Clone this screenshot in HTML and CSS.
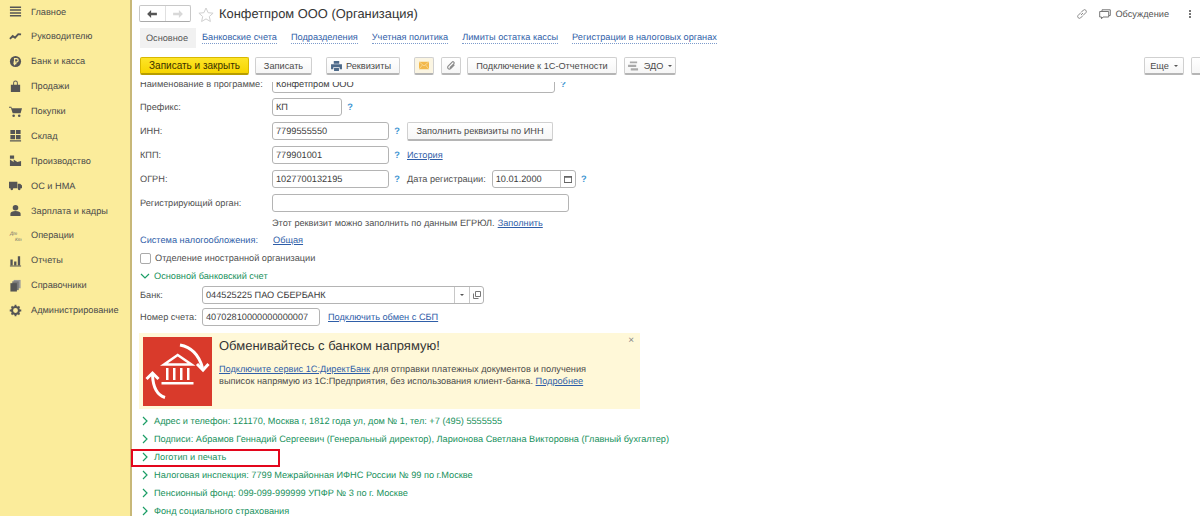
FILE: index.html
```html
<!DOCTYPE html>
<html lang="ru">
<head>
<meta charset="utf-8">
<title>Конфетпром ООО (Организация)</title>
<link rel="stylesheet" href="styles.css">
</head>
<body>
<div class="app">
  <nav class="side">
    <a class="side-item"><svg class="si" viewBox="0 0 14 14"><path d="M1 1.500h12v1.600H1zM1 4.600h12v1.600H1zM1 7.700h12v1.600H1zM1 10.800h12v1.600H1z"/></svg>Главное</a>
    <a class="side-item"><svg class="si" viewBox="0 0 14 14"><path d="M1 9.500l3-3 2.500 1.800L10 4.500l3 .2" fill="none" stroke="#555" stroke-width="2"/></svg>Руководителю</a>
    <a class="side-item"><svg class="si" viewBox="0 0 14 14"><circle cx="7" cy="7" r="6"/><path d="M6 11V3.800h2a1.900 1.900 0 0 1 0 3.800H4.800M4.800 9.300H8" fill="none" stroke="#fbec9b" stroke-width="1.300"/></svg>Банк и касса</a>
    <a class="side-item"><svg class="si" viewBox="0 0 14 14"><path d="M2 5h10v8H2zM4.500 5V3a2.500 2.500 0 0 1 5 0v2H8.500V3a1.500 1.500 0 0 0-3 0v2z"/></svg>Продажи</a>
    <a class="side-item"><svg class="si" viewBox="0 0 14 14"><path d="M0 2h2.500l.5 1.500h11L12.500 9H4L2 3H0z"/><circle cx="5" cy="11.500" r="1.400"/><circle cx="11" cy="11.500" r="1.400"/></svg>Покупки</a>
    <a class="side-item"><svg class="si" viewBox="0 0 14 14"><path d="M1.500 1h5v4.500h-5zM7.500 1h5v4.500h-5zM1.500 6.500h5V11h-5zM7.500 6.500h5V11h-5zM1 12h12v1.500H1z"/></svg>Склад</a>
    <a class="side-item"><svg class="si" viewBox="0 0 14 14"><path d="M1 13V6l4 2.500V6l4 2.500 4-1V13zM1 1.500h4.500V5H1z"/></svg>Производство</a>
    <a class="side-item"><svg class="si" viewBox="0 0 14 14"><path d="M0 3h9v7H0zM9.500 5h2.500L14 7v3H9.500z"/><circle cx="3" cy="10.500" r="1.500"/><circle cx="11" cy="10.500" r="1.500"/></svg>ОС и НМА</a>
    <a class="side-item"><svg class="si" viewBox="0 0 14 14"><circle cx="7" cy="4" r="3"/><path d="M1.500 13v-2.500c0-2 2.500-3 5.500-3s5.500 1 5.500 3V13z"/></svg>Зарплата и кадры</a>
    <a class="side-item"><svg class="si" viewBox="0 0 14 14"><text class="si-text" x="1" y="6">Дт</text><text class="si-text" x="6.500" y="12.500">Кт</text></svg>Операции</a>
    <a class="side-item"><svg class="si" viewBox="0 0 14 14"><path d="M1.500 6h2.500v6H1.500zM5.500 8H8v4H5.500zM9.500 2.500H12V12H9.500zM1 12.500h12v1H1z"/></svg>Отчеты</a>
    <a class="side-item"><svg class="si" viewBox="0 0 14 14"><path d="M5 1h7.500v9H5z" fill="#999"/><path d="M3.500 2.500h7v9.500h-7z" fill="#777"/><path d="M1.500 4.500h7V13.500h-7z"/></svg>Справочники</a>
    <a class="side-item"><svg class="si" viewBox="0 0 14 14"><circle cx="7" cy="7" r="3.700" fill="none" stroke="#555" stroke-width="2.200"/><path d="M6 .8h2v2.500H6zM6 10.700h2v2.500H6zM.8 6h2.500v2H.8zM10.700 6h2.500v2h-2.500zM2 3.400l1.400-1.400 1.700 1.700-1.400 1.400zM8.900 10.300l1.400-1.400 1.700 1.700-1.400 1.400zM2 10.600l1.700-1.700 1.400 1.400L3.400 12zM8.900 3.700L10.600 2 12 3.400l-1.700 1.700z"/></svg>Администрирование</a>
  </nav>

  <main class="main">
    <header class="titlebar">
      <div class="navpair">
        <span class="navbtn"><svg class="nav-ic" viewBox="0 0 11 9"><path d="M0 4.500L4.500 0v3H11v3H4.500v3z" fill="#555"/></svg></span>
        <span class="navbtn"><svg class="nav-ic" viewBox="0 0 11 9"><path d="M11 4.500L6.500 0v3H0v3h6.500v3z" fill="#d8d8d8"/></svg></span>
      </div>
      <svg class="star" viewBox="0 0 16 16"><path d="M8 1l2.100 4.700 5 .5-3.800 3.300 1.100 5L8 11.900l-4.400 2.600 1.100-5L.9 6.200l5-.5z" fill="none" stroke="#d0d0d0"/></svg>
      <h1 class="title">Конфетпром ООО (Организация)</h1>
      <div class="top-right">
        <svg class="link-ic" viewBox="0 0 12 12"><path d="M5 7l2-2M4.500 5L2 7.500a1.800 1.800 0 0 0 2.500 2.500L7 7.500M5 4.500L7.500 2a1.800 1.800 0 0 1 2.500 2.500L7.500 7" fill="none" stroke="#888"/></svg>
        <svg class="chat-ic" viewBox="0 0 12 11"><path d="M3 2V.8h8.300V6.500H10M.7 2.500h9V8H4L2.500 9.800V8H.7z" fill="none" stroke="#777"/></svg>
        <span class="discuss">Обсуждение</span>
        <span class="dots"><i></i><i></i><i></i></span>
      </div>
    </header>

    <div class="tabs">
      <span class="tab-active">Основное</span>
      <a class="tab">Банковские счета</a>
      <a class="tab">Подразделения</a>
      <a class="tab">Учетная политика</a>
      <a class="tab">Лимиты остатка кассы</a>
      <a class="tab">Регистрации в налоговых органах</a>
    </div>

    <div class="toolbar">
      <button class="btn btn-primary">Записать и закрыть</button>
      <button class="btn btn-save">Записать</button>
      <button class="btn btn-req"><svg class="ic" viewBox="0 0 12 11"><path d="M3 0h6v3H3zM0 3.500h12V9h-2.500V7h-7v2H0zM3.300 7.800h5.400V11H3.300z" fill="#4d6a8a"/></svg>Реквизиты</button>
      <button class="btn btn-sq btn-mail"><svg class="ic-m" viewBox="0 0 12 9"><path d="M0 0h12v9H0z" fill="#f2b84b"/><path d="M0 0l6 5 6-5M0 9l4-5M12 9L8 4" fill="none" stroke="#fbe3ac" stroke-width=".8"/></svg></button>
      <button class="btn btn-sq"><svg class="ic-m" viewBox="0 0 12 12"><path d="M10.500 5L5.500 10a2.200 2.200 0 0 1-3.300-3.200L7.500 1.500a1.500 1.500 0 0 1 2.200 2.200L4.500 9" fill="none" stroke="#8a8a8a" stroke-width="1.500"/></svg></button>
      <button class="btn btn-conn">Подключение к 1С-Отчетности</button>
      <button class="btn btn-edo"><svg class="ic" viewBox="0 0 12 11"><path d="M2 .5h8v2H2zM0 4h9v2.500H0zM3 8h8v2.500H3z" fill="#aaa"/></svg>ЭДО<span class="caret"></span></button>
      <span class="grow"></span>
      <button class="btn btn-more">Еще<span class="caret"></span></button>
      <button class="btn btn-help"></button>
    </div>

    <section class="form">
      <div class="row row-first">
        <label class="lab">Наименование в программе:</label>
        <span class="inp w-name">Конфетпром ООО</span>
        <span class="q">?</span>
      </div>
      <div class="row r24">
        <label class="lab">Префикс:</label>
        <span class="inp w-prefix">КП</span>
        <span class="q">?</span>
      </div>
      <div class="row r24">
        <label class="lab">ИНН:</label>
        <span class="inp w-code">7799555550</span>
        <span class="q">?</span>
        <button class="btn btn-fill">Заполнить реквизиты по ИНН</button>
      </div>
      <div class="row r24">
        <label class="lab">КПП:</label>
        <span class="inp w-code">779901001</span>
        <span class="q">?</span>
        <a class="lnk hist">История</a>
      </div>
      <div class="row r24">
        <label class="lab">ОГРН:</label>
        <span class="inp w-code">1027700132195</span>
        <span class="q">?</span>
        <span class="plain date-lab">Дата регистрации:</span>
        <span class="inp w-date">10.01.2000<span class="cal"><svg class="cal-ic" viewBox="0 0 9 9"><path d="M0 1h9v8H0zM1 3v5h7V3z" fill="#666"/></svg></span></span>
        <span class="q">?</span>
      </div>
      <div class="row r23">
        <label class="lab">Регистрирующий орган:</label>
        <span class="inp w-reg"></span>
      </div>
      <div class="row r17 indent">
        <span class="plain">Этот реквизит можно заполнить по данным ЕГРЮЛ.</span>
        <a class="lnk hint-lnk">Заполнить</a>
      </div>
      <div class="row r18">
        <a class="lab lab-link">Система налогообложения:</a>
        <a class="lnk">Общая</a>
      </div>
      <div class="row r18">
        <span class="check"></span>
        <span class="plain">Отделение иностранной организации</span>
      </div>
      <div class="row r18 group">
        <svg class="chev" viewBox="0 0 10 10"><path d="M1 3l4 4 4-4" fill="none" stroke="#1b9e66" stroke-width="1.200"/></svg>
        <span>Основной банковский счет</span>
      </div>
      <div class="row r19">
        <label class="lab lab-s">Банк:</label>
        <span class="inp w-bank">044525225 ПАО СБЕРБАНК<span class="drop"><span class="caret"></span></span><span class="open"><svg class="open-ic" viewBox="0 0 8 8"><path d="M2.500.5h5v5h-5zM.5 2.500v5h5" fill="none" stroke="#777"/></svg></span></span>
      </div>
      <div class="row r22 account-row">
        <label class="lab lab-s">Номер счета:</label>
        <span class="inp w-acc">40702810000000000007</span>
        <a class="lnk sbp">Подключить обмен с СБП</a>
      </div>

      <div class="banner">
        <div class="bank-logo">
          <svg class="bank-svg" viewBox="0 0 69 69">
            <path d="M37 8C48 10 56 18 59.500 31" fill="none" stroke="#fff" stroke-width="3"/>
            <path d="M54 27l6 6 5.500-6" fill="none" stroke="#fff" stroke-width="3"/>
            <path d="M22 60.500C14 58 10 50 9.500 38" fill="none" stroke="#fff" stroke-width="3"/>
            <path d="M3.500 42l6-6 6 6" fill="none" stroke="#fff" stroke-width="3"/>
            <path d="M21 27.500L34.700 18 48.500 27.500z" fill="none" stroke="#fff" stroke-width="2.500"/>
            <path d="M23 31h2.500v12H23zM30 31h2.500v12H30zM37 31h2.500v12H37zM44 31h2.500v12H44zM18.500 45h32v2.500h-32z" fill="#fff"/>
          </svg>
        </div>
        <div class="banner-body">
          <h2 class="banner-title">Обменивайтесь с банком напрямую!</h2>
          <p class="banner-text"><a class="lnk">Подключите сервис 1С:ДиректБанк</a> для отправки платежных документов и получения<br>выписок напрямую из 1С:Предприятия, без использования клиент-банка. <a class="lnk">Подробнее</a></p>
        </div>
        <span class="close">×</span>
      </div>

      <div class="row r18 group first-group"><svg class="chev" viewBox="0 0 10 10"><path d="M3 1l4 4-4 4" fill="none" stroke="#1b9e66" stroke-width="1.200"/></svg><span>Адрес и телефон: 121170, Москва г, 1812 года ул, дом № 1, тел: +7 (495) 5555555</span></div>
      <div class="row r18 group"><svg class="chev" viewBox="0 0 10 10"><path d="M3 1l4 4-4 4" fill="none" stroke="#1b9e66" stroke-width="1.200"/></svg><span>Подписи: Абрамов Геннадий Сергеевич (Генеральный директор), Ларионова Светлана Викторовна (Главный бухгалтер)</span></div>
      <div class="row r18 group"><svg class="chev" viewBox="0 0 10 10"><path d="M3 1l4 4-4 4" fill="none" stroke="#1b9e66" stroke-width="1.200"/></svg><span>Логотип и печать</span></div>
      <div class="row r18 group"><svg class="chev" viewBox="0 0 10 10"><path d="M3 1l4 4-4 4" fill="none" stroke="#1b9e66" stroke-width="1.200"/></svg><span>Налоговая инспекция: 7799 Межрайонная ИФНС России № 99 по г.Москве</span></div>
      <div class="row r18 group"><svg class="chev" viewBox="0 0 10 10"><path d="M3 1l4 4-4 4" fill="none" stroke="#1b9e66" stroke-width="1.200"/></svg><span>Пенсионный фонд: 099-099-999999 УПФР № 3 по г. Москве</span></div>
      <div class="row r18 group"><svg class="chev" viewBox="0 0 10 10"><path d="M3 1l4 4-4 4" fill="none" stroke="#1b9e66" stroke-width="1.200"/></svg><span>Фонд социального страхования</span></div>
    </section>
    <div class="highlight"></div>
  </main>
</div>
</body>
</html>
```

FILE: styles.css
```css
* { box-sizing: border-box; }
html, body { margin: 0; height: 516px; overflow: hidden; background: #fff; }
body { font-family: "Liberation Sans", Arial, sans-serif; font-size: 9.2px; color: #4a4a4a; text-rendering: geometricPrecision; }
.app { display: flex; height: 516px; }

.side { width: 132px; flex: none; background: #fbec9b; border-right: 2px solid #c8b878; }
.side-item { display: flex; align-items: center; height: 24.9px; color: #4a4a4a; padding-left: 9px; }
.side-item:first-child { height: 23.9px; }
.si { width: 13px; height: 13px; margin-right: 9px; fill: #555; flex: none; }
.si-text { font-size: 5px; font-style: italic; fill: #666; }

.main { flex: 1; min-width: 0; display: flex; flex-direction: column; position: relative; }

.titlebar { height: 28px; flex: none; display: flex; align-items: center; padding-left: 7px; }
.navpair { display: flex; width: 52px; height: 17px; border: 1px solid #c8c8c8; border-bottom-color: #aaa; border-radius: 2px; margin-top: -1px; }
.navbtn { flex: 1; display: flex; align-items: center; justify-content: center; }
.navbtn + .navbtn { border-left: 1px solid #e0e0e0; }
.nav-ic { width: 10px; height: 8px; }
.star { width: 16px; height: 16px; margin: 0 0 -1px 7px; }
.title { margin: -1px 0 0 5px; font-size: 12.9px; font-weight: 400; color: #333; }
.top-right { margin-left: auto; display: flex; align-items: center; }
.link-ic { width: 12px; height: 12px; margin-right: 11px; }
.chat-ic { width: 12px; height: 11px; margin-right: 4px; }
.discuss { color: #555; margin-right: 20px; }
.dots { display: flex; flex-direction: column; gap: 1px; margin-right: 9px; }
.dots i { display: block; width: 2px; height: 2px; background: #777; }

.tabs { height: 20px; flex: none; display: flex; align-items: center; padding-left: 8px; }
.tab-active { background: #f1f1f1; height: 20px; width: 56px; padding-right: 2px; display: flex; align-items: center; justify-content: center; color: #555; margin-right: 6px; }
.tab { color: #2f5ea8; border-bottom: 1px dotted #7d9bcb; line-height: 11px; margin-right: 14px; }

.toolbar { height: 34px; flex: none; display: flex; align-items: flex-start; padding: 9px 0 0 8px; width: calc(100% + 12px); }
.grow { flex: 1; }
.btn { font: inherit; color: #4a4a4a; height: 18px; padding: 0; display: inline-flex; align-items: center; justify-content: center; background: linear-gradient(#fff, #f6f6f6); border: 1px solid #d0d0d0; border-bottom: 2px solid #b5b5b5; border-radius: 2px; }
.btn-primary { width: 109px; font-size: 10px; background: linear-gradient(#fde428, #f7d500); border-color: #d8b800; border-bottom-color: #b79d00; color: #3a3000; margin-right: 6px; }
.btn-save { width: 57px; margin-right: 14px; }
.btn-req { width: 74px; margin-right: 14px; justify-content: flex-start; padding-left: 4px; }
.btn-req .ic { margin-right: 4px; }
.btn-sq { width: 20px; margin-right: 7px; }
.btn-mail { background: #fbf5e2; }
.btn-sq + .btn-sq { margin-right: 6px; }
.btn-conn { width: 150px; margin-right: 7px; }
.btn-edo { width: 52px; }
.btn-more { width: 40px; margin-right: 7px; }
.btn-help { width: 21px; flex: none; }
.ic { width: 11px; height: 10px; margin-right: 5px; }
.ic-m { width: 10px; height: 9px; }
.caret { display: inline-block; width: 0; height: 0; margin-left: 5px; border: 2px solid transparent; border-top: 2px solid #555; border-bottom: 0; }

.form { flex: 1; min-height: 0; overflow: hidden; padding-left: 8px; }
.row { display: flex; align-items: center; white-space: nowrap; }
.row-first { height: 23px; margin-top: -10px; }
.r24 { height: 24px; }
.r23 { height: 23px; }
.r22 { height: 22px; }
.r19 { height: 19px; }
.r18 { height: 18px; }
.r17 { height: 17px; }
.account-row { margin-top: 2px; }
.indent { padding-left: 132px; }
.lab { width: 132px; flex: none; color: #4f4f4f; }
.lab-s { width: 62px; }
.lab-link { color: #2f5ea8; width: 133px; }
.plain { color: #4f4f4f; }
.inp { display: flex; align-items: center; height: 18px; padding-left: 3px; border: 1px solid #b4b4b4; border-radius: 3px; color: #3c3c3c; background: #fff; flex: none; }
.w-name { width: 283px; }
.w-prefix { width: 70px; }
.w-code { width: 117px; }
.w-date { width: 84px; margin-left: 6px; }
.w-reg { width: 297px; }
.w-bank { width: 282px; }
.w-acc { width: 118px; }
.cal { margin-left: auto; width: 15px; height: 16px; border-left: 1px solid #c8c8c8; display: flex; align-items: center; justify-content: center; }
.drop { margin-left: auto; width: 15px; height: 16px; border-left: 1px solid #c8c8c8; display: flex; align-items: center; justify-content: center; }
.drop .caret { margin-left: 0; }
.open { width: 14px; height: 16px; border-left: 1px solid #c8c8c8; display: flex; align-items: center; justify-content: center; }
.open-ic { width: 8px; height: 8px; }
.cal-ic { width: 8px; height: 8px; }
.q { color: #3f96d2; font-weight: 700; width: 16px; margin-right: 2px; flex: none; text-align: center; }
.btn-fill { width: 146px; height: 19px; }
.lnk { color: #2f5ea8; text-decoration: underline; }
.hint-lnk { margin-left: 3px; }
.sbp { margin-left: 8px; }
.check { width: 11px; height: 11px; border: 1px solid #aaa; border-radius: 2px; margin-right: 4px; }
.group { color: #17915c; }
.chev { width: 10px; height: 10px; margin-right: 4px; flex: none; }
.first-group { margin-top: 3px; }

.banner { width: 501px; height: 76px; margin: 5px 0 0 -1px; background: #fff8d8; display: flex; padding: 4px; position: relative; }
.bank-logo { width: 69px; height: 69px; flex: none; background: #d93a2b; }
.bank-svg { width: 69px; height: 69px; display: block; }
.banner-body { margin-left: 7px; }
.banner-title { font-size: 13px; font-weight: 400; color: #333; margin: 0 0 9px; line-height: 17px; }
.banner-text { margin: 0; line-height: 12px; color: #4a4a4a; }
.close { position: absolute; right: 6px; top: 2px; font-size: 10px; color: #888; }

.highlight { position: absolute; left: -1px; top: 449px; width: 149px; height: 18px; border: 2px solid #e3061c; }
```
